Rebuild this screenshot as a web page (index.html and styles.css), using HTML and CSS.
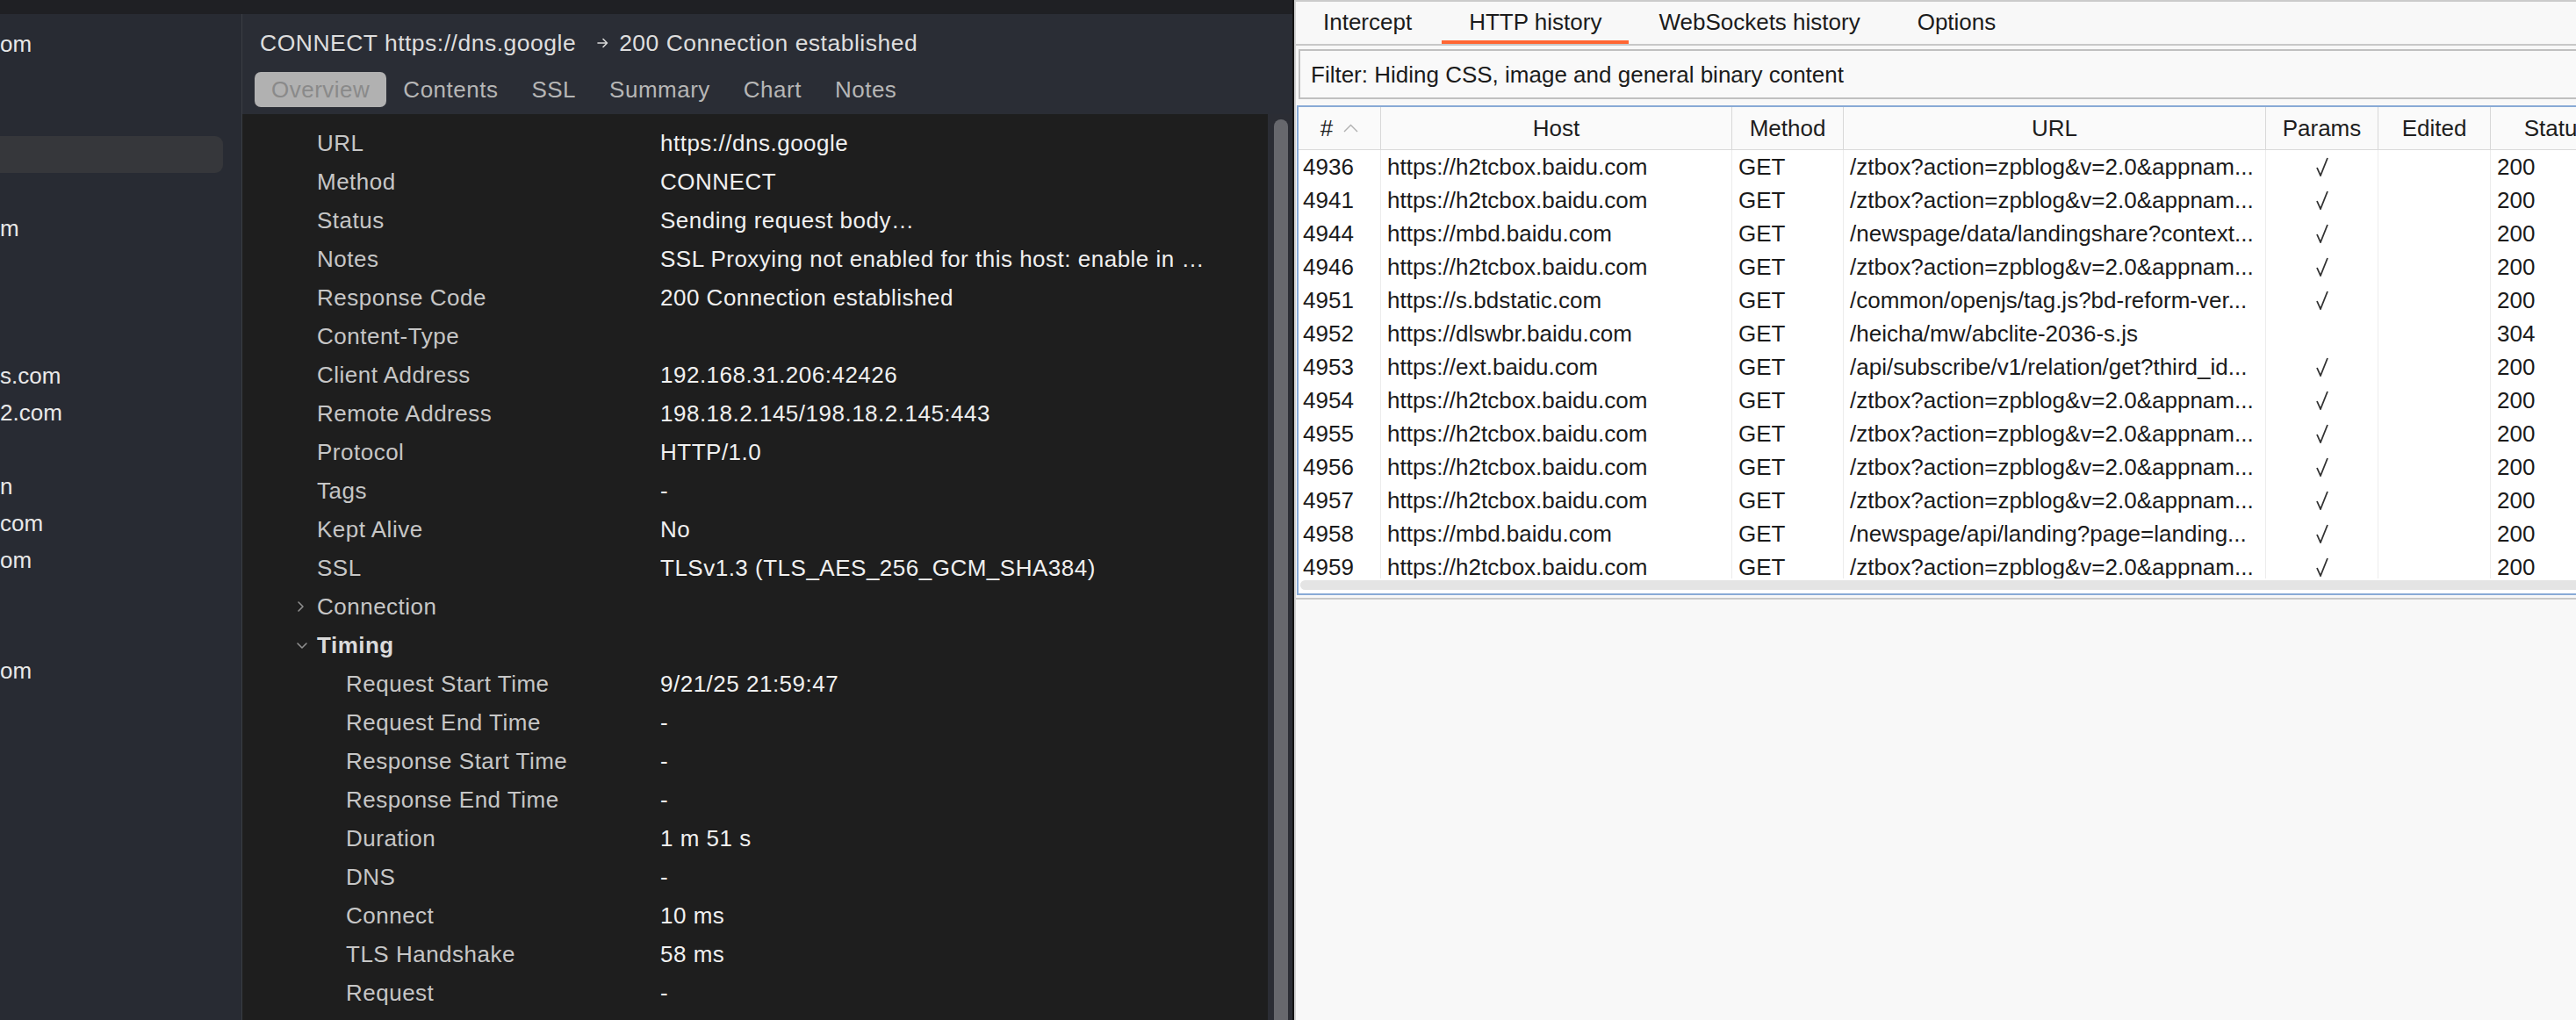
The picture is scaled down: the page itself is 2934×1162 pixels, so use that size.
FILE: index.html
```html
<!DOCTYPE html>
<html>
<head>
<meta charset="utf-8">
<link rel="stylesheet" href="styles.css">
</head>
<body>
<div class="screen">
  <div class="app">
    <div class="topbar"></div>
    <div class="app-body">
      <aside class="sidebar">
        <div class="side-row">om</div>
        <div class="side-row"></div>
        <div class="side-row"></div>
        <div class="side-row sel"></div>
        <div class="side-row"></div>
        <div class="side-row">m</div>
        <div class="side-row"></div>
        <div class="side-row"></div>
        <div class="side-row"></div>
        <div class="side-row">s.com</div>
        <div class="side-row">2.com</div>
        <div class="side-row"></div>
        <div class="side-row">n</div>
        <div class="side-row">com</div>
        <div class="side-row">om</div>
        <div class="side-row"></div>
        <div class="side-row"></div>
        <div class="side-row">om</div>
        <div class="side-row"></div>
        <div class="side-row"></div>
        <div class="side-row"></div>
        <div class="side-row"></div>
        <div class="side-row"></div>
        <div class="side-row"></div>
        <div class="side-row"></div>
        <div class="side-row"></div>
        <div class="side-row"></div>
      </aside>
      <main class="main">
        <header class="head">
          <div class="title">
            <span>CONNECT https://dns.google</span>
            <svg class="arrow" width="13" height="12" viewBox="0 0 13 12"><path d="M1 6 H11.5 M7 1.5 L11.5 6 L7 10.5" fill="none" stroke="#d8d8d8" stroke-width="1.6" stroke-linecap="round" stroke-linejoin="round"/></svg>
            <span>200 Connection established</span>
          </div>
          <nav class="tabs">
            <span class="tab active">Overview</span>
            <span class="tab">Contents</span>
            <span class="tab">SSL</span>
            <span class="tab">Summary</span>
            <span class="tab">Chart</span>
            <span class="tab">Notes</span>
          </nav>
        </header>
        <div class="content">
          <div class="details">
            <div class="row"><span class="lbl">URL</span><span class="val">https://dns.google</span></div>
            <div class="row"><span class="lbl">Method</span><span class="val">CONNECT</span></div>
            <div class="row"><span class="lbl">Status</span><span class="val">Sending request body…</span></div>
            <div class="row"><span class="lbl">Notes</span><span class="val">SSL Proxying not enabled for this host: enable in …</span></div>
            <div class="row"><span class="lbl">Response Code</span><span class="val">200 Connection established</span></div>
            <div class="row"><span class="lbl">Content-Type</span><span class="val"></span></div>
            <div class="row"><span class="lbl">Client Address</span><span class="val">192.168.31.206:42426</span></div>
            <div class="row"><span class="lbl">Remote Address</span><span class="val">198.18.2.145/198.18.2.145:443</span></div>
            <div class="row"><span class="lbl">Protocol</span><span class="val">HTTP/1.0</span></div>
            <div class="row"><span class="lbl">Tags</span><span class="val">-</span></div>
            <div class="row"><span class="lbl">Kept Alive</span><span class="val">No</span></div>
            <div class="row"><span class="lbl">SSL</span><span class="val">TLSv1.3 (TLS_AES_256_GCM_SHA384)</span></div>
            <div class="row"><span class="lbl"><span class="chev"><svg width="10" height="14" viewBox="0 0 10 14"><path d="M3 2 L8 7 L3 12" fill="none" stroke="#8f8f8f" stroke-width="1.6" stroke-linecap="round" stroke-linejoin="round"/></svg></span>Connection</span><span class="val"></span></div>
            <div class="row"><span class="lbl group"><span class="chev"><svg width="14" height="10" viewBox="0 0 14 10"><path d="M2 3 L7 8 L12 3" fill="none" stroke="#8f8f8f" stroke-width="1.6" stroke-linecap="round" stroke-linejoin="round"/></svg></span>Timing</span><span class="val"></span></div>
            <div class="row sub"><span class="lbl">Request Start Time</span><span class="val">9/21/25 21:59:47</span></div>
            <div class="row sub"><span class="lbl">Request End Time</span><span class="val">-</span></div>
            <div class="row sub"><span class="lbl">Response Start Time</span><span class="val">-</span></div>
            <div class="row sub"><span class="lbl">Response End Time</span><span class="val">-</span></div>
            <div class="row sub"><span class="lbl">Duration</span><span class="val">1 m 51 s</span></div>
            <div class="row sub"><span class="lbl">DNS</span><span class="val">-</span></div>
            <div class="row sub"><span class="lbl">Connect</span><span class="val">10 ms</span></div>
            <div class="row sub"><span class="lbl">TLS Handshake</span><span class="val">58 ms</span></div>
            <div class="row sub"><span class="lbl">Request</span><span class="val">-</span></div>
          </div>
          <div class="vscroll"><div class="thumb"></div></div>
        </div>
      </main>
    </div>
  </div>

  <section class="burp">
    <nav class="btabs">
      <span class="btab">Intercept</span>
      <span class="btab active">HTTP history</span>
      <span class="btab">WebSockets history</span>
      <span class="btab">Options</span>
    </nav>
    <div class="filter">Filter: Hiding CSS, image and general binary content</div>
    <div class="btable">
      <div class="thead">
        <div class="th">#<svg class="caret" width="17" height="10" viewBox="0 0 17 10"><path d="M1 9 L8.5 1.5 L16 9" fill="none" stroke="#b0b0b0" stroke-width="1.4"/></svg></div>
        <div class="th">Host</div>
        <div class="th">Method</div>
        <div class="th">URL</div>
        <div class="th">Params</div>
        <div class="th">Edited</div>
        <div class="th">Status</div>
      </div>
      <div class="tbody">
        <div class="tr"><span class="td num">4936</span><span class="td">https://h2tcbox.baidu.com</span><span class="td">GET</span><span class="td">/ztbox?action=zpblog&amp;v=2.0&amp;appnam...</span><span class="td chk"><svg width="14" height="22" viewBox="0 0 14 22"><path d="M1 12 L5 21 L13 1" fill="none" stroke="#333" stroke-width="1.8"/></svg></span><span class="td"></span><span class="td">200</span></div>
        <div class="tr"><span class="td num">4941</span><span class="td">https://h2tcbox.baidu.com</span><span class="td">GET</span><span class="td">/ztbox?action=zpblog&amp;v=2.0&amp;appnam...</span><span class="td chk"><svg width="14" height="22" viewBox="0 0 14 22"><path d="M1 12 L5 21 L13 1" fill="none" stroke="#333" stroke-width="1.8"/></svg></span><span class="td"></span><span class="td">200</span></div>
        <div class="tr"><span class="td num">4944</span><span class="td">https://mbd.baidu.com</span><span class="td">GET</span><span class="td">/newspage/data/landingshare?context...</span><span class="td chk"><svg width="14" height="22" viewBox="0 0 14 22"><path d="M1 12 L5 21 L13 1" fill="none" stroke="#333" stroke-width="1.8"/></svg></span><span class="td"></span><span class="td">200</span></div>
        <div class="tr"><span class="td num">4946</span><span class="td">https://h2tcbox.baidu.com</span><span class="td">GET</span><span class="td">/ztbox?action=zpblog&amp;v=2.0&amp;appnam...</span><span class="td chk"><svg width="14" height="22" viewBox="0 0 14 22"><path d="M1 12 L5 21 L13 1" fill="none" stroke="#333" stroke-width="1.8"/></svg></span><span class="td"></span><span class="td">200</span></div>
        <div class="tr"><span class="td num">4951</span><span class="td">https://s.bdstatic.com</span><span class="td">GET</span><span class="td">/common/openjs/tag.js?bd-reform-ver...</span><span class="td chk"><svg width="14" height="22" viewBox="0 0 14 22"><path d="M1 12 L5 21 L13 1" fill="none" stroke="#333" stroke-width="1.8"/></svg></span><span class="td"></span><span class="td">200</span></div>
        <div class="tr"><span class="td num">4952</span><span class="td">https://dlswbr.baidu.com</span><span class="td">GET</span><span class="td">/heicha/mw/abclite-2036-s.js</span><span class="td chk"></span><span class="td"></span><span class="td">304</span></div>
        <div class="tr"><span class="td num">4953</span><span class="td">https://ext.baidu.com</span><span class="td">GET</span><span class="td">/api/subscribe/v1/relation/get?third_id...</span><span class="td chk"><svg width="14" height="22" viewBox="0 0 14 22"><path d="M1 12 L5 21 L13 1" fill="none" stroke="#333" stroke-width="1.8"/></svg></span><span class="td"></span><span class="td">200</span></div>
        <div class="tr"><span class="td num">4954</span><span class="td">https://h2tcbox.baidu.com</span><span class="td">GET</span><span class="td">/ztbox?action=zpblog&amp;v=2.0&amp;appnam...</span><span class="td chk"><svg width="14" height="22" viewBox="0 0 14 22"><path d="M1 12 L5 21 L13 1" fill="none" stroke="#333" stroke-width="1.8"/></svg></span><span class="td"></span><span class="td">200</span></div>
        <div class="tr"><span class="td num">4955</span><span class="td">https://h2tcbox.baidu.com</span><span class="td">GET</span><span class="td">/ztbox?action=zpblog&amp;v=2.0&amp;appnam...</span><span class="td chk"><svg width="14" height="22" viewBox="0 0 14 22"><path d="M1 12 L5 21 L13 1" fill="none" stroke="#333" stroke-width="1.8"/></svg></span><span class="td"></span><span class="td">200</span></div>
        <div class="tr"><span class="td num">4956</span><span class="td">https://h2tcbox.baidu.com</span><span class="td">GET</span><span class="td">/ztbox?action=zpblog&amp;v=2.0&amp;appnam...</span><span class="td chk"><svg width="14" height="22" viewBox="0 0 14 22"><path d="M1 12 L5 21 L13 1" fill="none" stroke="#333" stroke-width="1.8"/></svg></span><span class="td"></span><span class="td">200</span></div>
        <div class="tr"><span class="td num">4957</span><span class="td">https://h2tcbox.baidu.com</span><span class="td">GET</span><span class="td">/ztbox?action=zpblog&amp;v=2.0&amp;appnam...</span><span class="td chk"><svg width="14" height="22" viewBox="0 0 14 22"><path d="M1 12 L5 21 L13 1" fill="none" stroke="#333" stroke-width="1.8"/></svg></span><span class="td"></span><span class="td">200</span></div>
        <div class="tr"><span class="td num">4958</span><span class="td">https://mbd.baidu.com</span><span class="td">GET</span><span class="td">/newspage/api/landing?page=landing...</span><span class="td chk"><svg width="14" height="22" viewBox="0 0 14 22"><path d="M1 12 L5 21 L13 1" fill="none" stroke="#333" stroke-width="1.8"/></svg></span><span class="td"></span><span class="td">200</span></div>
        <div class="tr"><span class="td num">4959</span><span class="td">https://h2tcbox.baidu.com</span><span class="td">GET</span><span class="td">/ztbox?action=zpblog&amp;v=2.0&amp;appnam...</span><span class="td chk"><svg width="14" height="22" viewBox="0 0 14 22"><path d="M1 12 L5 21 L13 1" fill="none" stroke="#333" stroke-width="1.8"/></svg></span><span class="td"></span><span class="td">200</span></div>
      </div>
      <div class="hscroll"><div class="hbar"></div></div>
    </div>
    <div class="bline"></div>
  </section>
</div>
</body>
</html>
```
FILE: styles.css
```css
html, body {
  margin: 0;
  padding: 0;
}
body {
  width: 2934px;
  height: 1162px;
  overflow: hidden;
  font-family: "Liberation Sans", Arial, sans-serif;
  background: #f8f8f8;
}
.screen {
  display: flex;
  height: 1162px;
}

/* ---------- left dark app ---------- */
.app {
  width: 1474px;
  flex: none;
  display: flex;
  flex-direction: column;
  background: #1e1e1e;
  border-right: 2px solid #141414;
  box-sizing: border-box;
}
.topbar {
  height: 16px;
  flex: none;
  background: #1f2024;
}
.app-body {
  flex: 1;
  display: flex;
  min-height: 0;
}
.sidebar {
  width: 275px;
  flex: none;
  border-right: 1px solid #3a3d44;
  background: #282b33;
  padding-top: 13px;
  overflow: hidden;
}
.side-row {
  height: 42px;
  line-height: 42px;
  font-size: 26px;
  color: #e8e8e8;
  white-space: nowrap;
  margin-right: 21px;
}
.side-row.sel {
  background: #36373b;
  border-radius: 0 9px 9px 0;
}
.main {
  flex: 1;
  display: flex;
  flex-direction: column;
  min-width: 0;
}
.head {
  height: 114px;
  flex: none;
  background: #2a2d35;
  box-sizing: border-box;
  padding-top: 18px;
}
.title {
  display: flex;
  align-items: center;
  padding-left: 20px;
  font-size: 26.5px;
  letter-spacing: 0.5px;
  line-height: 30px;
  color: #dedede;
  white-space: nowrap;
}
.arrow {
  margin: 0 12px 0 24px;
}
.tabs {
  display: flex;
  margin-top: 18px;
  padding-left: 14px;
}
.tab {
  height: 40px;
  line-height: 40px;
  padding: 0 19px;
  font-size: 26px;
  letter-spacing: 0.5px;
  color: #b6b6b6;
  border-radius: 7px;
}
.tab.active {
  background: #b1b1b1;
  color: #8a8a8a;
}
.content {
  flex: 1;
  display: flex;
  min-height: 0;
}
.details {
  flex: 1;
  min-width: 0;
  padding: 11px 0 0 85px;
  font-size: 26px;
  letter-spacing: 0.5px;
  overflow: hidden;
}
.row {
  display: grid;
  grid-template-columns: 391px 1fr;
  height: 44px;
  line-height: 44px;
  white-space: nowrap;
}
.lbl {
  display: flex;
  align-items: center;
  color: #c6c6c6;
}
.val {
  color: #f0f0f0;
  overflow: hidden;
}
.row.sub .lbl {
  padding-left: 33px;
}
.chev {
  width: 24px;
  margin-left: -24px;
  display: flex;
  align-items: center;
}
.lbl.group {
  font-weight: bold;
  color: #dadada;
}
.vscroll {
  width: 28px;
  flex: none;
  background: #2b2d34;
  padding: 6px 5px 0 7px;
  box-sizing: border-box;
}
.thumb {
  height: 100%;
  background: #67686d;
  border-radius: 8px 8px 0 0;
}

/* ---------- right Burp panel ---------- */
.burp {
  flex: 1;
  min-width: 0;
  border-left: 2px solid #d3d3d3;
  border-top: 2px solid #cbcbcb;
  background: #f8f8f8;
  overflow: hidden;
  font-size: 26px;
  color: #1b1b1b;
}
.btabs {
  display: flex;
  gap: 3px;
  height: 48px;
  border-bottom: 2px solid #c8c8c8;
}
.btab {
  padding: 0 31px;
  line-height: 46px;
  border-bottom: 4px solid transparent;
  white-space: nowrap;
}
.btab.active {
  border-bottom-color: #ff6633;
}
.filter {
  margin: 4px 0 0 3px;
  width: 1600px;
  height: 57px;
  box-sizing: border-box;
  border: 2px solid #c0c0c0;
  background: #f9f9f9;
  padding: 2px 0 0 12px;
  line-height: 51px;
  white-space: nowrap;
}
.btable {
  margin: 7px 0 0 1px;
  width: 1600px;
  height: 558px;
  box-sizing: border-box;
  border: 2px solid #88aad6;
  background: #ffffff;
  display: flex;
  flex-direction: column;
}
.thead, .tr {
  display: grid;
  grid-template-columns: 94px 400px 127px 481px 128px 128px 150px;
}
.thead {
  height: 49px;
  flex: none;
  box-sizing: border-box;
  border-bottom: 1px solid #dadada;
  background: #fafafa;
}
.th {
  display: flex;
  align-items: center;
  justify-content: center;
  border-right: 1px solid #d8d8d8;
  color: #1e1e1e;
}
.caret {
  margin-left: 12px;
}
.tbody {
  height: 488px;
  flex: none;
  overflow: hidden;
}
.tr {
  height: 38px;
  line-height: 38px;
}
.td {
  padding: 0 7px;
  border-right: 1px solid #ececec;
  white-space: nowrap;
  overflow: hidden;
}
.td.num {
  padding-left: 5px;
}
.td.chk {
  display: flex;
  align-items: center;
  justify-content: center;
  padding: 0;
}
.hscroll {
  flex: 1;
  padding: 2px 0 3px 2px;
}
.hbar {
  height: 11px;
  background: #e4e4e4;
  border-radius: 6px;
}
.bline {
  margin-top: 3px;
  height: 2px;
  background: #c8c8c8;
}
```
